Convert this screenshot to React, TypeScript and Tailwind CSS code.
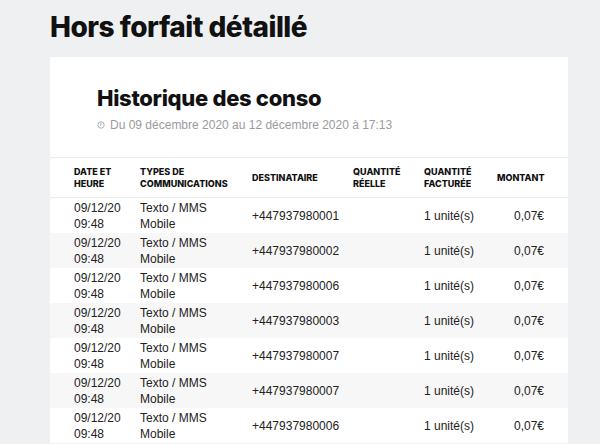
const rows = ["+447937980001","+447937980002","+447937980006","+447937980003","+447937980007","+447937980007","+447937980006"];
const grid = "grid grid-cols-[66px_112px_101px_71px_73px_47px] px-[24px]";
export default function App() {
  return (
    <div className="h-[444px] w-[600px] overflow-hidden bg-[#eff0f2] pl-[50px] pr-[32px]" style={{fontFamily:'"Liberation Sans", Arial, sans-serif'}}>
      <h1 className="pt-[10px] text-[28px] font-extrabold leading-[34px] tracking-[-0.5px] text-[#111]" style={{fontFamily:'Inter, "DejaVu Sans", sans-serif'}}>Hors forfait détaillé</h1>
      <div className="mt-[13px] bg-white">
        <div className="pl-[47px] pt-[28px] pb-[23px]">
          <h2 className="text-[22px] font-extrabold leading-[26px] tracking-[-0.3px] text-[#111]" style={{fontFamily:'Inter, "DejaVu Sans", sans-serif'}}>Historique des conso</h2>
          <div className="mt-[5px] flex items-center gap-[5px] text-[12px] text-[#9a9aa0]">
            <svg width="8" height="8" viewBox="0 0 10 10" fill="none" stroke="#9a9aa0" strokeWidth="1"><circle cx="5" cy="5" r="4"/><path d="M5 2.5V5l-1.5 1.5"/></svg>
            Du 09 décembre 2020 au 12 décembre 2020 à 17:13
          </div>
        </div>
        <div className={`${grid} h-[41px] items-center border-t border-b border-[#ececec] text-[9px] font-extrabold uppercase leading-[12px] text-[#111]`} style={{fontFamily:'Inter, "DejaVu Sans", sans-serif'}}>
          <div>Date et<br/>heure</div>
          <div>Types de<br/>communications</div>
          <div>Destinataire</div>
          <div>Quantité<br/>réelle</div>
          <div>Quantité<br/>facturée</div>
          <div className="text-right">Montant</div>
        </div>
        {rows.map((r,i)=>(
          <div key={i} className={`${grid} h-[35px] items-center text-[12px] leading-[16px] text-[#222] ${i%2? "bg-[#f7f7f7]":""}`}>
            <div>09/12/20<br/>09:48</div>
            <div>Texto / MMS<br/>Mobile</div>
            <div>{r}</div>
            <div></div>
            <div>1 unité(s)</div>
            <div className="text-right">0,07€</div>
          </div>
        ))}
      </div>
    </div>
  );
}
